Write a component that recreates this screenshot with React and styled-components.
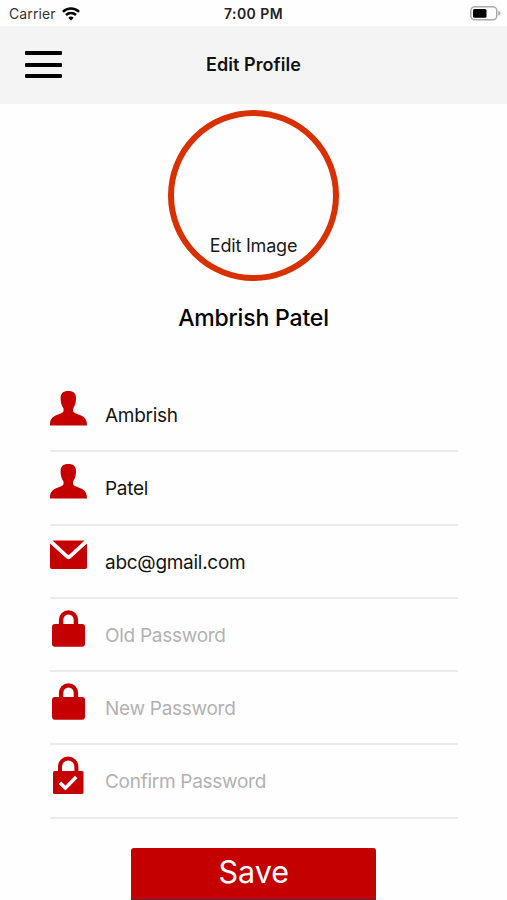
import React from 'react';
import styled, { createGlobalStyle } from 'styled-components';

const GlobalStyle = createGlobalStyle`
    * {
        box-sizing: border-box;
    }

    body {
        margin: 0;
        background: #fff;
        color: #000;
        font-family: Inter, 'Liberation Sans', sans-serif;
    }
`;

const Screen = styled.div`
    display: flex;
    flex-direction: column;
    width: 507px;
    height: 900px;
    overflow: hidden;
    background: #fefefe;
`;

// Status bar
const StatusBar = styled.div`
    display: grid;
    grid-template-columns: 1fr auto 1fr;
    align-items: center;
    height: 26px;
    padding: 1px 6px 0 9px;
    flex-shrink: 0;
    line-height: 18px;
`;

const Carrier = styled.div`
    display: flex;
    align-items: center;
    gap: 6px;
    font-size: 14px;
    color: #333;
    letter-spacing: 0.1px;
`;

const Clock = styled.div`
    margin-right: 3px;
    font-size: 14px;
    font-weight: 600;
    color: #222;
    letter-spacing: 0.45px;
`;

const Battery = styled.svg`
    justify-self: end;
`;

// Navigation header
const Header = styled.header`
    display: grid;
    grid-template-columns: 1fr auto 1fr;
    align-items: center;
    height: 78px;
    padding: 0 25px;
    background: #f4f4f4;
    flex-shrink: 0;
`;

const MenuButton = styled.button`
    display: flex;
    flex-direction: column;
    justify-content: space-between;
    width: 37px;
    height: 27px;
    margin-bottom: 1px;
    padding: 0;
    border: 0;
    background: none;
    cursor: pointer;
`;

const MenuLine = styled.span`
    height: 4px;
    border-radius: 1px;
    background: #000;
`;

const Title = styled.h1`
    margin: 0;
    font-size: 18px;
    font-weight: 600;
    line-height: 24px;
    color: #111;
    letter-spacing: 0.05px;
`;

// Avatar and name
const Profile = styled.section`
    display: flex;
    flex-direction: column;
    align-items: center;
    height: 275px;
    padding-top: 6px;
    flex-shrink: 0;
`;

const Avatar = styled.div`
    display: flex;
    align-items: flex-end;
    justify-content: center;
    width: 171px;
    height: 171px;
    padding-bottom: 17px;
    border: 6px solid #d93000;
    border-radius: 50%;
    font-size: 18px;
    line-height: 24px;
    color: #1a1a1a;
    letter-spacing: -0.2px;
`;

const Name = styled.h2`
    margin: 22px 0 0;
    font-size: 23px;
    font-weight: 500;
    line-height: 30px;
    letter-spacing: -0.18px;
`;

// Form
const Form = styled.form`
    display: flex;
    flex-direction: column;
    padding: 0 49.5px 0 50px;
`;

const Field = styled.div`
    display: flex;
    gap: 18px;
    height: 73.25px;
    border-bottom: 2px solid #ebebeb;
`;

const FieldIcon = styled.svg`
    width: 37px;
    height: 40px;
    margin-top: 11px;
    flex-shrink: 0;
    fill: #c40000;
`;

const FieldText = styled.span`
    margin-top: 25px;
    font-size: 19px;
    line-height: 24px;
    color: ${({ $placeholder }) => ($placeholder ? '#b2b2b2' : '#141414')};
    letter-spacing: -0.28px;
`;

const SaveButton = styled.button`
    align-self: center;
    width: 245px;
    height: 51.5px;
    margin-top: 29.5px;
    padding: 0 0 3px;
    border: 0;
    border-bottom: 1px solid #5a2545;
    border-radius: 3px 3px 0 0;
    background: #c40000;
    color: #fff;
    font-family: inherit;
    font-size: 30.5px;
    line-height: 36px;
    cursor: pointer;
`;

const PersonIcon = () => (
    <FieldIcon viewBox="0 0 37 40">
        <path d="M18.300 1.100c-5.200 0-7.900 2.500-7.700 7.400.1 4 .9 7.200 2.900 10 .4 2.700-.1 3.800-2.300 4.700C6.500 25.200 0 26.300 0 34v1.400h36.900V34c0-7.700-6.800-8.800-11.500-10.800-2.200-.9-2.700-2-2.300-4.700 2-2.800 2.800-6 2.900-10 .2-4.900-2.500-7.400-7.700-7.400z" />
    </FieldIcon>
);

const MailIcon = () => (
    <FieldIcon viewBox="0 -4 37 40">
        <path d="M2.500 -.6h32L19.700 13.300q-1.200 1.100-2.400 0z" />
        <path d="M0 2.500 16.300 17.200q2.200 1.900 4.400 0L37 2.500V25.500a2.600 2.600 0 0 1-2.600 2.600H2.600A2.600 2.600 0 0 1 0 25.500z" />
    </FieldIcon>
);

const LockIcon = () => (
    <FieldIcon viewBox="0 0 37 40">
        <path d="M11.100 16V9.800a7.400 7.400 0 0 1 14.800 0V16" fill="none" stroke="#c40000" strokeWidth="4.400" />
        <rect x="2" y="14" width="33" height="22.800" rx="3" />
    </FieldIcon>
);

const LockCheckIcon = () => (
    <FieldIcon viewBox="0 0 37 40">
        <path d="M10 17V10.600a8.200 8.200 0 0 1 16.400 0V17" fill="none" stroke="#c40000" strokeWidth="4" />
        <rect x="3" y="15" width="30.500" height="23" rx="1.500" />
        <path d="M10 26.800l5.400 5.300L26.200 21" fill="none" stroke="#fff" strokeWidth="3.500" />
    </FieldIcon>
);

const fields = [
    { text: 'Ambrish', Icon: PersonIcon },
    { text: 'Patel', Icon: PersonIcon },
    { text: 'abc@gmail.com', Icon: MailIcon },
    { text: 'Old Password', Icon: LockIcon, placeholder: true },
    { text: 'New Password', Icon: LockIcon, placeholder: true },
    { text: 'Confirm Password', Icon: LockCheckIcon, placeholder: true },
];

const EditProfile = () => (
    <>
        <GlobalStyle />
        <Screen>
            <StatusBar>
                <Carrier>
                    Carrier
                    <svg width="18" height="14" viewBox="0 0 18 14" fill="none" stroke="#000" strokeWidth="2.500">
                        <path d="M.9 4.800a11.500 11.500 0 0 1 16.200 0" />
                        <path d="M4 8a7.100 7.100 0 0 1 10 0" />
                        <path d="M9 13.500 6.300 10.700a3.900 3.900 0 0 1 5.400 0z" fill="#000" stroke="none" />
                    </svg>
                </Carrier>
                <Clock>7:00 PM</Clock>
                <Battery width="31" height="15" viewBox="0 0 31 15">
                    <rect x=".8" y=".8" width="26" height="13" rx="4" fill="#fff" stroke="#aaa" strokeWidth="1.500" />
                    <rect x="3" y="3" width="13.500" height="8.700" rx="1.500" fill="#000" />
                    <path d="M28.300 4.800q2.200.8 2.200 2.500t-2.200 2.500z" fill="#aaa" />
                </Battery>
            </StatusBar>
            <Header>
                <MenuButton aria-label="Menu">
                    <MenuLine />
                    <MenuLine />
                    <MenuLine />
                </MenuButton>
                <Title>Edit Profile</Title>
            </Header>
            <Profile>
                <Avatar>Edit Image</Avatar>
                <Name>Ambrish Patel</Name>
            </Profile>
            <Form>
                {fields.map(({ text, Icon, placeholder }) => (
                    <Field key={text}>
                        <Icon />
                        <FieldText $placeholder={placeholder}>{text}</FieldText>
                    </Field>
                ))}
                <SaveButton type="button">Save</SaveButton>
            </Form>
        </Screen>
    </>
);

export default EditProfile;
